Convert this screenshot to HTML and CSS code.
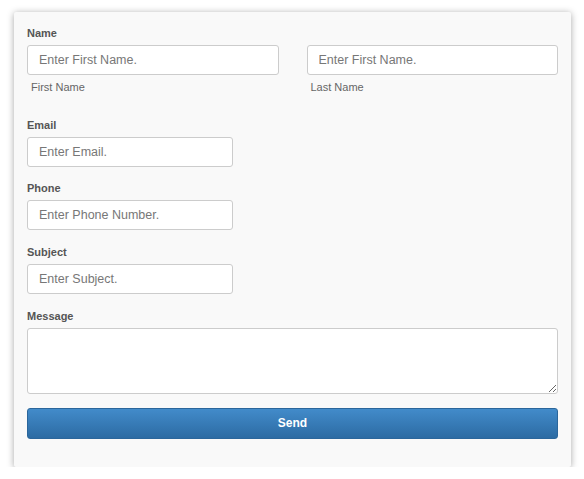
FILE: index.html
```html
<!DOCTYPE html>
<html>
<head>
<meta charset="utf-8">
<link rel="stylesheet" href="styles.css">
</head>
<body>
<form class="card">
  <div class="group">
    <label class="label">Name</label>
    <div class="name-row">
      <div class="col">
        <input class="field" type="text" placeholder="Enter First Name.">
        <div class="sublabel">First Name</div>
      </div>
      <div class="col">
        <input class="field" type="text" placeholder="Enter First Name.">
        <div class="sublabel">Last Name</div>
      </div>
    </div>
  </div>
  <div class="group group-first">
    <label class="label">Email</label>
    <input class="field short" type="text" placeholder="Enter Email.">
  </div>
  <div class="group">
    <label class="label">Phone</label>
    <input class="field short" type="text" placeholder="Enter Phone Number.">
  </div>
  <div class="group">
    <label class="label">Subject</label>
    <input class="field short" type="text" placeholder="Enter Subject.">
  </div>
  <div class="group">
    <label class="label">Message</label>
    <textarea class="field area"></textarea>
  </div>
  <button class="send" type="button">Send</button>
</form>
</body>
</html>
```

FILE: styles.css
```css
html, body {
  margin: 0;
  padding: 0;
  background: #ffffff;
}
body {
  padding: 12px 13px 0 14px;
  font-family: "Liberation Sans", Arial, sans-serif;
}
.card {
  width: 557px;
  box-sizing: border-box;
  background: #f9f9f9;
  border-radius: 2px;
  box-shadow: 0 1px 7px rgba(0, 0, 0, 0.35);
  padding: 13px 13px 28px 13px;
  display: flex;
  flex-direction: column;
}
.group {
  display: flex;
  flex-direction: column;
  margin-bottom: 13.67px;
}
.group-first {
  margin-top: 8px;
}
.label {
  font-size: 11px;
  font-weight: bold;
  line-height: 16px;
  color: #555555;
  margin-bottom: 4px;
}
.name-row {
  display: grid;
  grid-template-columns: 1fr 1fr;
  column-gap: 28px;
}
.col {
  display: flex;
  flex-direction: column;
}
.sublabel {
  font-size: 11px;
  line-height: 16px;
  color: #666666;
  margin-top: 4px;
  padding-left: 4px;
}
.field {
  box-sizing: border-box;
  height: 30px;
  width: 100%;
  margin: 0;
  border: 1px solid #cccccc;
  border-radius: 3px;
  background: #ffffff;
  padding: 0 11px;
  font-family: "Liberation Sans", Arial, sans-serif;
  font-size: 12.5px;
  color: #555555;
  outline: none;
}
.field::placeholder {
  color: #777777;
  opacity: 1;
}
.short {
  width: 206px;
}
.area {
  height: 66px;
  resize: vertical;
  padding: 6px 11px;
}
.send {
  margin-top: 0.33px;
  height: 31px;
  width: 100%;
  border: 1px solid #2b669b;
  border-radius: 3px;
  background: linear-gradient(to bottom, #428bca 0%, #2c6ba3 100%);
  color: #ffffff;
  font-family: "Liberation Sans", Arial, sans-serif;
  font-size: 12px;
  font-weight: bold;
  padding: 0;
  cursor: pointer;
}
```
